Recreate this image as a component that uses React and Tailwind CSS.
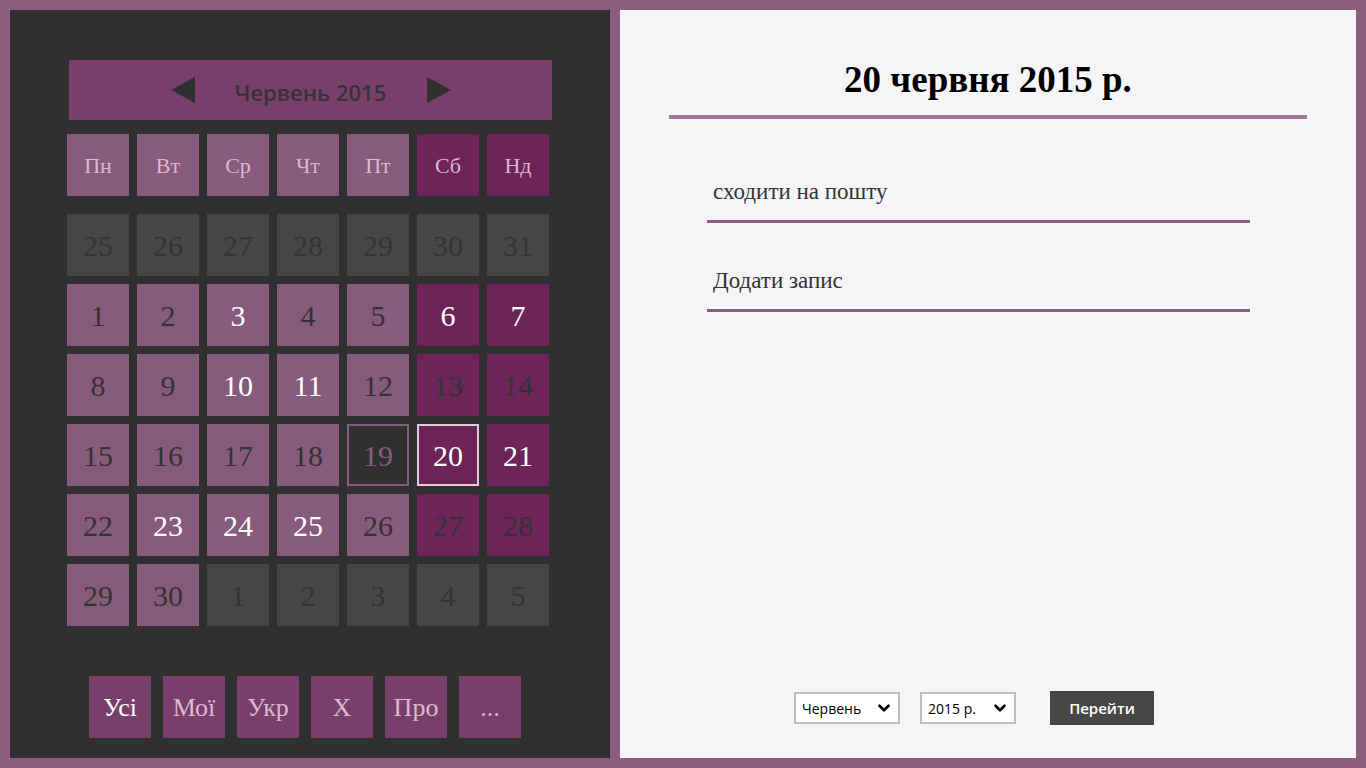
import { ChevronDown } from "lucide-react";

const serif = { fontFamily: '"Liberation Serif", "DejaVu Serif", serif' };

const weekDays = ["Пн", "Вт", "Ср", "Чт", "Пт", "Сб", "Нд"];

// kind: o = other month, w = weekday, e = weekend; hl = has entries (white text)
const rows = [
  [25, 26, 27, 28, 29, 30, 31].map((d) => ({ d, kind: "o" })),
  [
    { d: 1, kind: "w" },
    { d: 2, kind: "w" },
    { d: 3, kind: "w", hl: true },
    { d: 4, kind: "w" },
    { d: 5, kind: "w" },
    { d: 6, kind: "e", hl: true },
    { d: 7, kind: "e", hl: true },
  ],
  [
    { d: 8, kind: "w" },
    { d: 9, kind: "w" },
    { d: 10, kind: "w", hl: true },
    { d: 11, kind: "w", hl: true },
    { d: 12, kind: "w" },
    { d: 13, kind: "e" },
    { d: 14, kind: "e" },
  ],
  [
    { d: 15, kind: "w" },
    { d: 16, kind: "w" },
    { d: 17, kind: "w" },
    { d: 18, kind: "w" },
    { d: 19, kind: "today" },
    { d: 20, kind: "e", hl: true, selected: true },
    { d: 21, kind: "e", hl: true },
  ],
  [
    { d: 22, kind: "w" },
    { d: 23, kind: "w", hl: true },
    { d: 24, kind: "w", hl: true },
    { d: 25, kind: "w", hl: true },
    { d: 26, kind: "w" },
    { d: 27, kind: "e" },
    { d: 28, kind: "e" },
  ],
  [
    { d: 29, kind: "w" },
    { d: 30, kind: "w" },
    ...[1, 2, 3, 4, 5].map((d) => ({ d, kind: "o" })),
  ],
];

const DayCell = ({ cell }) => {
  let cls = "bg-[#875b7c] text-[#333333]";
  if (cell.kind === "e") cls = "bg-[#6c2459] text-[#333333]";
  if (cell.kind === "o") cls = "bg-[#464646] text-[#333333]";
  if (cell.kind === "today") cls = "bg-[#303030] text-[#875b7c] border-2 border-[#875b7c]";
  if (cell.hl) cls = cls.replace("text-[#333333]", "text-white");
  if (cell.selected) cls += " border-2 border-[#e2c9dc]";
  return (
    <div className={`w-[62px] h-[62px] flex items-center justify-center text-[30px] ${cls}`} style={serif}>
      {cell.d}
    </div>
  );
};

const Triangle = ({ dir }) => (
  <svg width="24" height="26" viewBox="0 0 24 26">
    {dir === "left" ? <path d="M24 0 L0 13 L24 26 Z" fill="#303030" /> : <path d="M0 0 L24 13 L0 26 Z" fill="#303030" />}
  </svg>
);

const Select = ({ label, w }) => (
  <div className={`h-[32px] ${w} bg-white border-2 border-[#bdbdbd] flex items-center justify-between pl-[6px] pr-[5px] text-[14px] text-black`}>
    <span>{label}</span>
    <ChevronDown size={18} strokeWidth={3.5} />
  </div>
);

export default function App() {
  return (
    <div className="w-[1366px] h-[768px] bg-[#8b5e80] p-[10px] flex gap-[10px] overflow-hidden" style={{ fontFamily: '"Open Sans", "Noto Sans", sans-serif' }}>
      {/* calendar */}
      <div className="w-[600px] h-[748px] bg-[#303030] pt-[50px] pl-[57px] flex flex-col">
        <div className="ml-[2px] w-[483px] h-[60px] bg-[#773f6a] flex items-center justify-center gap-[38px]">
          <Triangle dir="left" />
          <span className="text-[22px] font-semibold text-[#333333] w-[156px] text-center pt-[4px]">Червень 2015</span>
          <Triangle dir="right" />
        </div>

        <div className="mt-[14px] grid grid-cols-[repeat(7,62px)] gap-[8px]">
          {weekDays.map((d, i) => (
            <div key={d} className={`w-[62px] h-[62px] flex items-center justify-center text-[22px] text-[#dcb8d3] ${i > 4 ? "bg-[#6c2459]" : "bg-[#875b7c]"}`} style={serif}>
              {d}
            </div>
          ))}
        </div>

        <div className="mt-[18px] grid grid-cols-[repeat(7,62px)] gap-[8px]">
          {rows.flat().map((c, i) => (
            <DayCell key={i} cell={c} />
          ))}
        </div>

        <div className="mt-[50px] ml-[22px] flex gap-[12px]">
          {["Усі", "Мої", "Укр", "Х", "Про", "..."].map((t, i) => (
            <div key={t} className={`w-[62px] h-[62px] bg-[#773f6a] flex items-center justify-center text-[26px] ${i === 0 ? "text-white" : "text-[#dcb8d3]"}`} style={serif}>
              {t}
            </div>
          ))}
        </div>
      </div>

      {/* day details */}
      <div className="flex-1 h-[748px] bg-[#f5f5f8] flex flex-col">
        <div className="px-[49px] pt-[46px]">
          <h1 className="text-[37px] font-bold text-black text-center leading-[48px]" style={serif}>
            20 червня 2015 р.
          </h1>
          <div className="mt-[11px] h-[4px] bg-[#9c7893]" />
        </div>

        <div className="pl-[87px] w-[630px] mt-[58px] flex flex-col gap-[43px]">
          <div>
            <div className="pl-[6px] text-[23px] text-[#333333] leading-[30px]" style={serif}>сходити на пошту</div>
            <div className="mt-[13px] h-[3px] bg-[#8b5e80]" />
          </div>
          <div>
            <div className="pl-[6px] text-[23px] text-[#333333] leading-[30px]" style={serif}>Додати запис</div>
            <div className="mt-[13px] h-[3px] bg-[#8b5e80]" />
          </div>
        </div>

        <div className="mt-auto mb-[33px] ml-[174px] flex items-center">
          <Select label="Червень" w="w-[106px]" />
          <div className="ml-[20px]">
            <Select label="2015 р." w="w-[96px]" />
          </div>
          <button className="ml-[34px] w-[104px] h-[34px] bg-[#474747] text-white text-[15px] font-semibold">Перейти</button>
        </div>
      </div>
    </div>
  );
}
